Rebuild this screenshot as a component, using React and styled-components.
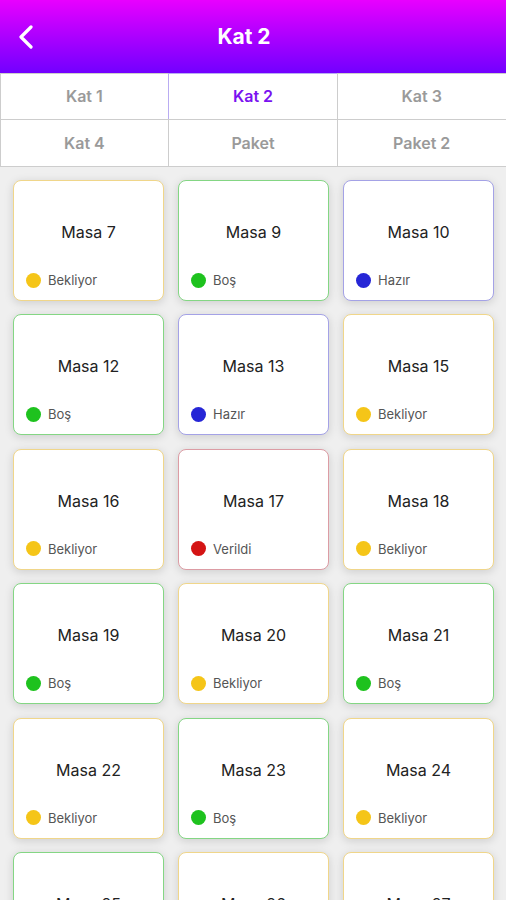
import React from 'react';
import styled, { createGlobalStyle } from 'styled-components';

const GlobalStyle = createGlobalStyle`
  html, body {
    margin: 0;
    padding: 0;
    background: #efefef;
    font-family: Inter, Roboto, "Noto Sans", Arial, sans-serif;
    overflow: hidden;
  }
  * { box-sizing: border-box; }
`;

const STATUS = {
  Bekliyor: { dot: '#f5c518', border: '#f0d68a' },
  'Boş': { dot: '#1ec21e', border: '#84d684' },
  'Hazır': { dot: '#2626d6', border: '#a4a2e6' },
  Verildi: { dot: '#d41414', border: '#dc9ca4' },
};

const tables = [
  ['Masa 7', 'Bekliyor'], ['Masa 9', 'Boş'], ['Masa 10', 'Hazır'],
  ['Masa 12', 'Boş'], ['Masa 13', 'Hazır'], ['Masa 15', 'Bekliyor'],
  ['Masa 16', 'Bekliyor'], ['Masa 17', 'Verildi'], ['Masa 18', 'Bekliyor'],
  ['Masa 19', 'Boş'], ['Masa 20', 'Bekliyor'], ['Masa 21', 'Boş'],
  ['Masa 22', 'Bekliyor'], ['Masa 23', 'Boş'], ['Masa 24', 'Bekliyor'],
  ['Masa 25', 'Boş'], ['Masa 26', 'Bekliyor'], ['Masa 27', 'Bekliyor'],
];

const tabs = ['Kat 1', 'Kat 2', 'Kat 3', 'Kat 4', 'Paket', 'Paket 2'];

const Screen = styled.div`
  width: 506px;
  min-height: 900px;
  background: #efefef;
`;

const Header = styled.header`
  height: 73px;
  display: flex;
  align-items: center;
  background: linear-gradient(180deg, #e800ff 0%, #a600ff 55%, #7200ff 100%);
`;

const BackButton = styled.button`
  width: 52px;
  height: 73px;
  padding: 0 0 0 18px;
  border: none;
  background: transparent;
  display: flex;
  align-items: center;
`;

const Title = styled.h1`
  flex: 1;
  margin: 0;
  text-align: center;
  color: #fff;
  font-size: 21px;
  font-weight: 700;
`;

const Spacer = styled.div`
  width: 70px;
`;

const TabGrid = styled.div`
  display: grid;
  grid-template-columns: repeat(3, 1fr);
  background: #fff;
`;

const Tab = styled.div`
  height: 47.5px;
  display: flex;
  align-items: center;
  justify-content: center;
  border: 1.5px solid ${p => (p.active ? '#b9acf2' : '#cdcdcd')};
  margin: -0.5px;
  font-size: 16px;
  font-weight: 600;
  color: ${p => (p.active ? '#7a12f0' : '#9a9a9a')};
  background: #fff;
`;

const CardGrid = styled.div`
  display: grid;
  grid-template-columns: repeat(3, 1fr);
  column-gap: 14px;
  row-gap: 13.4px;
  padding: 14px 12px 14px 13px;
`;

const Card = styled.div`
  height: 121px;
  display: flex;
  flex-direction: column;
  justify-content: space-between;
  padding: 40px 12px 12px 12px;
  background: #fff;
  border: 1px solid ${p => p.border};
  border-radius: 8px;
  box-shadow: 0 2px 10px rgba(0, 0, 0, 0.14);
`;

const TableName = styled.div`
  text-align: center;
  font-size: 16px;
  line-height: 22px;
  color: #222;
`;

const Status = styled.div`
  display: flex;
  align-items: center;
  gap: 7px;
  height: 16px;
  font-size: 13px;
  color: #555;
`;

const Dot = styled.span`
  width: 15px;
  height: 15px;
  border-radius: 50%;
  background: ${p => p.color};
  flex-shrink: 0;
`;

export default function App() {
  return (
    <Screen>
      <GlobalStyle />
      <Header>
        <BackButton aria-label="Geri">
          <svg width="16" height="24" viewBox="0 0 16 24" fill="none">
            <path d="M13 2 L3 12 L13 22" stroke="#fff" strokeWidth="3.2" strokeLinecap="round" strokeLinejoin="round" />
          </svg>
        </BackButton>
        <Title>Kat 2</Title>
        <Spacer />
      </Header>
      <TabGrid>
        {tabs.map(t => (
          <Tab key={t} active={t === 'Kat 2'}>{t}</Tab>
        ))}
      </TabGrid>
      <CardGrid>
        {tables.map(([name, status]) => (
          <Card key={name} border={STATUS[status].border}>
            <TableName>{name}</TableName>
            <Status>
              <Dot color={STATUS[status].dot} />
              {status}
            </Status>
          </Card>
        ))}
      </CardGrid>
    </Screen>
  );
}
